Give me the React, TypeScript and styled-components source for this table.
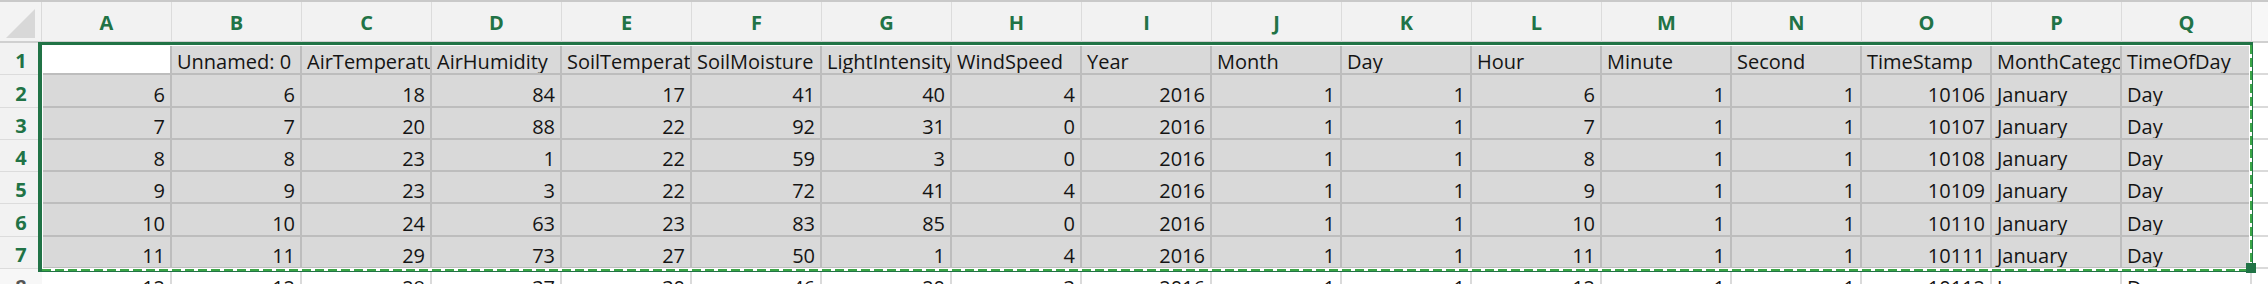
import { Fragment } from "react";
import styled, { createGlobalStyle } from "styled-components";

const GlobalStyle = createGlobalStyle`
    html, body {
        margin: 0;
        padding: 0;
        background: #ffffff;
    }
    body {
        font-family: "Open Sans", "Liberation Sans", sans-serif;
    }
`

const COLUMNS = "ABCDEFGHIJKLMNOPQR".split("");
const SELECTED_COLS = 17;
const SELECTED_ROWS = 7;

const header = ["", "Unnamed: 0", "AirTemperature", "AirHumidity", "SoilTemperature", "SoilMoisture", "LightIntensity", "WindSpeed", "Year", "Month", "Day", "Hour", "Minute", "Second", "TimeStamp", "MonthCategory", "TimeOfDay"];

const data = [
    ["6", "6", "18", "84", "17", "41", "40", "4", "2016", "1", "1", "6", "1", "1", "10106", "January", "Day"],
    ["7", "7", "20", "88", "22", "92", "31", "0", "2016", "1", "1", "7", "1", "1", "10107", "January", "Day"],
    ["8", "8", "23", "1", "22", "59", "3", "0", "2016", "1", "1", "8", "1", "1", "10108", "January", "Day"],
    ["9", "9", "23", "3", "22", "72", "41", "4", "2016", "1", "1", "9", "1", "1", "10109", "January", "Day"],
    ["10", "10", "24", "63", "23", "83", "85", "0", "2016", "1", "1", "10", "1", "1", "10110", "January", "Day"],
    ["11", "11", "29", "73", "27", "50", "1", "4", "2016", "1", "1", "11", "1", "1", "10111", "January", "Day"],
    ["12", "12", "28", "37", "30", "46", "20", "3", "2016", "1", "1", "12", "1", "1", "10112", "January", "Day"],
];

const rows = [header, ...data];

const Sheet = styled.div`
    position: relative;
    width: 2268px;
    height: 284px;
    overflow: hidden;
    box-sizing: border-box;
    border-top: 2px solid #c9c9c9;
    display: grid;
    grid-template-columns: 42px repeat(18, 130px);
    grid-template-rows: 41px repeat(8, 32.3px);
    font-size: 20px;
`
const Corner = styled.div`
    position: relative;
    background-color: #f3f3f3;
    border-right: 1px solid #dadada;
    border-bottom: 2px solid #d0d0d0;

    &::after {
        content: "";
        position: absolute;
        right: 6px;
        bottom: 3px;
        width: 29px;
        height: 29px;
        background-color: #d8d8d8;
        clip-path: polygon(100% 0, 100% 100%, 0 100%);
    }
`
const ColHead = styled.div<{ $sel: boolean }>`
    display: flex;
    align-items: flex-end;
    justify-content: center;
    box-sizing: border-box;
    padding-bottom: 7px;
    line-height: 22px;
    background-color: ${p => p.$sel ? "#f2f2f2" : "#f7f7f7"};
    border-right: 1px solid #dcdcdc;
    border-bottom: 2px solid #d0d0d0;
    color: ${p => p.$sel ? "#217346" : "#555555"};
    font-weight: 700;
`
const RowHead = styled.div<{ $sel: boolean }>`
    display: flex;
    align-items: flex-end;
    justify-content: center;
    box-sizing: border-box;
    padding-bottom: 2px;
    line-height: 22px;
    background-color: ${p => p.$sel ? "#f2f2f2" : "#f7f7f7"};
    border-bottom: 1px solid #dcdcdc;
    color: ${p => p.$sel ? "#217346" : "#555555"};
    font-weight: 700;
`
const Cell = styled.div<{ $sel: boolean; $active: boolean; $num: boolean }>`
    display: flex;
    align-items: flex-end;
    justify-content: ${p => p.$num ? "flex-end" : "flex-start"};
    box-sizing: border-box;
    min-width: 0;
    padding: 0 5px;
    line-height: 22px;
    white-space: nowrap;
    overflow: hidden;
    text-overflow: clip;
    color: #141414;
    background-color: ${p => p.$sel && !p.$active ? "#d9d9d9" : "#ffffff"};
    border-right: 2px solid ${p => p.$sel ? "#bdbdbd" : "#dadada"};
    border-bottom: 2px solid ${p => p.$sel ? "#bdbdbd" : "#dadada"};
`
const Selection = styled.div`
    position: absolute;
    left: 38px;
    top: 40px;
    width: 2215px;
    height: 230px;
    box-sizing: border-box;
    border-style: solid;
    border-color: #217346;
    border-width: 3px 1px 1px 4px;
    box-shadow: inset 1px 1px 0 #ffffff;
    pointer-events: none;
`
const Ants = styled.div`
    position: absolute;
    inset: 0;
    background:
        repeating-linear-gradient(90deg, #3ba646 0 9px, #ffffff 9px 13px) left 0 bottom 0 / 100% 2px no-repeat,
        linear-gradient(#ffffff, #ffffff) left 0 bottom 2px / 100% 1px no-repeat,
        repeating-linear-gradient(180deg, #3ba646 0 9px, #ffffff 9px 13px) right 0 top 0 / 2px 100% no-repeat,
        linear-gradient(#ffffff, #ffffff) right 2px top 0 / 1px 100% no-repeat;
`
const FillHandle = styled.div`
    position: absolute;
    right: -4px;
    bottom: -2px;
    width: 10px;
    height: 10px;
    background-color: #217346;
`

const isNumber = (v: string) => /^\d+$/.test(v);

const App = () => {
    return (
        <>
            <GlobalStyle />
            <Sheet>
                <Corner />
                {COLUMNS.map((c, i) => (
                    <ColHead key={c} $sel={i < SELECTED_COLS}>{c}</ColHead>
                ))}
                {rows.map((row, r) => (
                    <Fragment key={r}>
                        <RowHead $sel={r < SELECTED_ROWS}>{r + 1}</RowHead>
                        {COLUMNS.map((c, i) => {
                            const value = row[i] ?? "";
                            return (
                                <Cell
                                    key={c}
                                    $sel={r < SELECTED_ROWS && i < SELECTED_COLS}
                                    $active={r === 0 && i === 0}
                                    $num={isNumber(value)}
                                >
                                    {value}
                                </Cell>
                            );
                        })}
                    </Fragment>
                ))}
                <Selection>
                    <Ants />
                    <FillHandle />
                </Selection>
            </Sheet>
        </>
    );
}

export default App;
